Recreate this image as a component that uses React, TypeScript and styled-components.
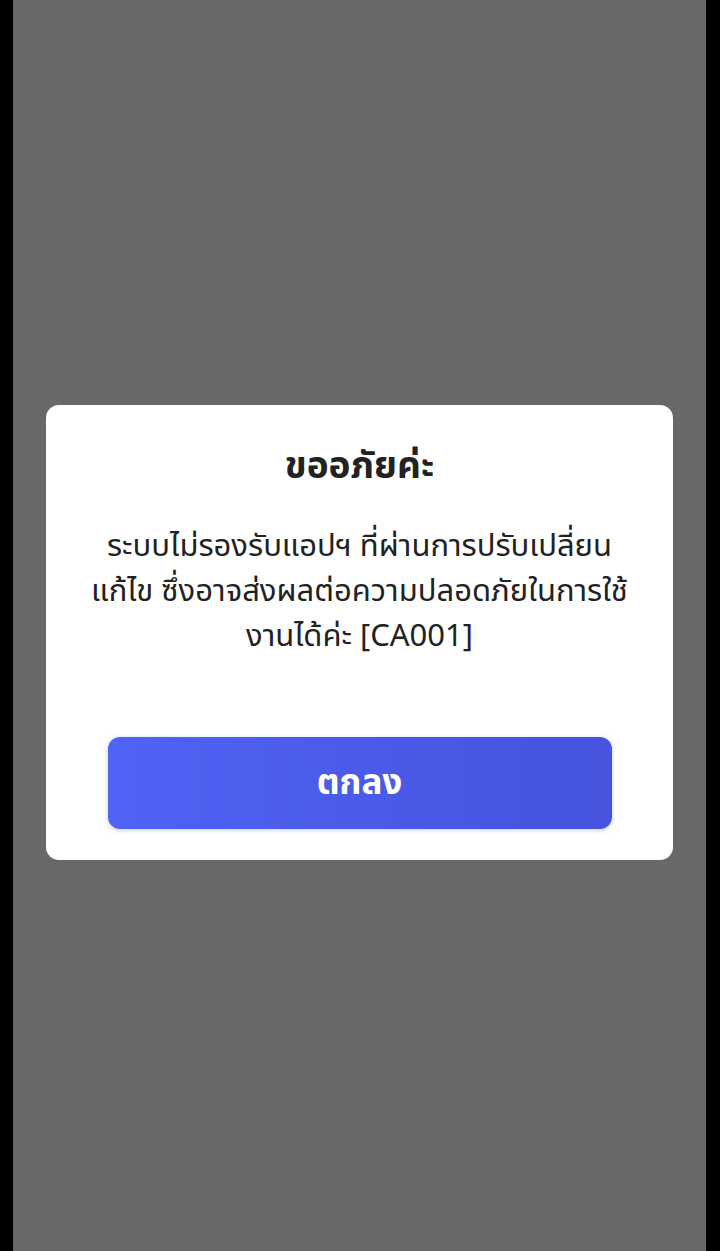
import React from "react";
import styled, { createGlobalStyle } from "styled-components";

const GlobalStyle = createGlobalStyle`
  html, body {
    margin: 0;
    padding: 0;
    background: #000;
  }
  body {
    font-family: "Noto Sans Thai", "Noto Sans", "DejaVu Sans", sans-serif;
  }
`;

const Screen = styled.div`
  width: 720px;
  height: 1251px;
  background: #000;
  display: flex;
  padding: 0 14px 0 13px;
  box-sizing: border-box;
`;

const Backdrop = styled.div`
  flex: 1;
  background: #686868;
  display: flex;
  align-items: center;
  justify-content: center;
  padding-top: 14px;
`;

const Dialog = styled.div`
  width: 627px;
  background: #fff;
  border-radius: 13px;
  box-sizing: border-box;
  padding: 37px 20px 31px;
  display: flex;
  flex-direction: column;
  align-items: center;
`;

const Title = styled.h2`
  margin: 0;
  font-size: 37px;
  font-weight: 700;
  color: #222;
  line-height: 50px;
`;

const Message = styled.p`
  margin: 32px 0 0;
  font-size: 31px;
  line-height: 45px;
  color: #222;
  text-align: center;
  white-space: nowrap;
`;

const ConfirmButton = styled.button`
  margin-top: 78px;
  width: 504px;
  height: 92px;
  border: none;
  border-radius: 12px;
  background: linear-gradient(90deg, #5063f5, #4553dd);
  box-shadow: 0 1px 4px rgba(80, 100, 245, 0.35);
  color: #fff;
  font-family: inherit;
  font-size: 35px;
  font-weight: 700;
  cursor: pointer;
`;

export default function App() {
  return (
    <>
      <GlobalStyle />
      <Screen>
        <Backdrop>
          <Dialog>
            <Title>ขออภัยค่ะ</Title>
            <Message>
              ระบบไม่รองรับแอปฯ ที่ผ่านการปรับเปลี่ยน
              <br />
              แก้ไข ซึ่งอาจส่งผลต่อความปลอดภัยในการใช้
              <br />
              งานได้ค่ะ [CA001]
            </Message>
            <ConfirmButton>ตกลง</ConfirmButton>
          </Dialog>
        </Backdrop>
      </Screen>
    </>
  );
}
